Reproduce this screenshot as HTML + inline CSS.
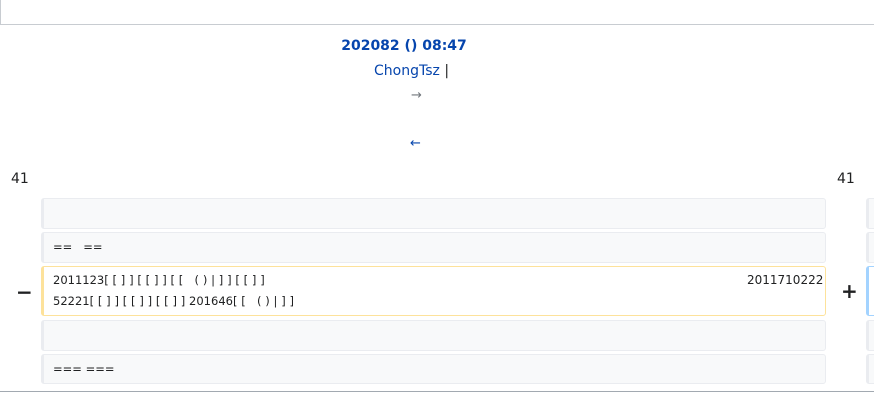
<!DOCTYPE html><html><head><meta charset="utf-8"><style>
body{margin:0;width:874px;height:402px;overflow:hidden;background:#fff;font-family:"DejaVu Sans","Liberation Sans",sans-serif;color:#202122;position:relative}
.a{position:absolute;white-space:nowrap}
.c{position:absolute;background:#f8f9fa;border:1px solid #eaecf0;border-left:3px solid #eaecf0;border-radius:3px;box-sizing:border-box;font-size:11.5px;line-height:24px;padding-left:9px}
.b{letter-spacing:3.8px}
</style></head><body>
<div class="a" style="left:0;top:-2px;width:880px;height:27px;border:1px solid #c8ccd1;box-sizing:border-box"></div>
<div class="a" style="left:339px;width:130px;top:38px;text-align:center;font-size:14px;font-weight:bold;color:#0645ad">202082 () 08:47</div>
<div class="a" style="left:374px;top:63px;font-size:14px;color:#0645ad">ChongTsz <span style="color:#202122">|</span></div>
<div class="a" style="left:411px;top:88px;font-size:13px;color:#72777d">→</div>
<div class="a" style="left:410px;top:136px;font-size:13px;color:#0645ad">←</div>
<div class="a" style="left:11px;top:171px;font-size:14px">41</div>
<div class="a" style="left:837px;top:171px;font-size:14px">41</div>
<div class="c" style="left:41px;top:198px;width:785px;height:31px"></div>
<div class="c" style="left:41px;top:232px;width:785px;height:31px;padding-top:2px">==&nbsp;&nbsp;&nbsp;==</div>
<div class="c" style="left:41px;top:266px;width:785px;height:50px;background:#fff;border-color:#fde29b;line-height:21px;padding-top:3px">2011123<span class="b">[[]][[]][[ ()|]][[]]</span><br>52221<span class="b">[[]][[]][[]]</span>201646<span class="b">[[ ()|]]</span><span class="a" style="left:703px;top:3px;font-size:12px">2011710222</span></div>
<div class="c" style="left:41px;top:320px;width:785px;height:31px"></div>
<div class="c" style="left:41px;top:354px;width:785px;height:30px;padding-top:2px">=== ===</div>
<div class="a" style="left:16px;top:280px;font-size:20px;font-weight:bold">−</div>
<div class="a" style="left:841px;top:279px;font-size:20px;font-weight:bold">+</div>
<div class="c" style="left:866px;top:198px;width:20px;height:31px"></div>
<div class="c" style="left:866px;top:232px;width:20px;height:31px"></div>
<div class="c" style="left:866px;top:266px;width:20px;height:50px;background:#fff;border-color:#a3d3ff"></div>
<div class="c" style="left:866px;top:320px;width:20px;height:31px"></div>
<div class="c" style="left:866px;top:354px;width:20px;height:30px"></div>
<div class="a" style="left:0;top:391px;width:874px;height:1px;background:#a2a9b1"></div>
</body></html>
